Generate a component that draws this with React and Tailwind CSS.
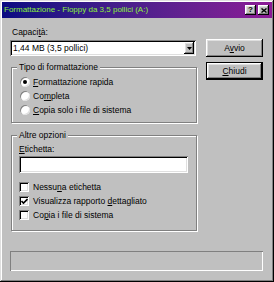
import React from 'react';

const U = ({ children }) => <span className="underline underline-offset-[1px]">{children}</span>;

const raised = 'shadow-[inset_-1px_-1px_0_#000,inset_1px_1px_0_#fff,inset_-2px_-2px_0_#808080,inset_2px_2px_0_#dfdfdf]';
const sunken = 'shadow-[inset_1px_1px_0_#808080,inset_-1px_-1px_0_#fff,inset_2px_2px_0_#000,inset_-2px_-2px_0_#dfdfdf]';

const Radio = ({ checked, children }) => (
  <div className="flex items-center h-[14px]">
    <div className="ml-[8px] w-[10px] h-[10px] rounded-full bg-white shadow-[inset_1px_1px_0_#808080,inset_-1px_-1px_0_#dfdfdf] flex items-center justify-center">
      {checked && <div className="w-[4px] h-[4px] rounded-full bg-black" />}
    </div>
    <span className="ml-[3px] leading-[10px]">{children}</span>
  </div>
);

const Check = ({ checked, children }) => (
  <div className="flex items-center h-[14px]">
    <div className={`ml-[7px] w-[10px] h-[10px] bg-white ${sunken} flex items-center justify-center`}>
      {checked && (
        <svg width="7" height="7" viewBox="0 0 7 7">
          <path d="M0.5 3 L2.5 5 L6.5 1" stroke="#000" strokeWidth="1.6" fill="none" />
        </svg>
      )}
    </div>
    <span className="ml-[4px] leading-[10px]">{children}</span>
  </div>
);

const Group = ({ title, className, children }) => (
  <div className={`ml-[1px] w-[186px] border border-[#808080] shadow-[inset_1px_1px_0_#fff,1px_1px_0_#fff] ${className}`}>
    <span className="block w-fit -mt-[6px] ml-[5px] px-[2px] bg-[#c0c0c0] leading-[10px]">{title}</span>
    {children}
  </div>
);

export default function App() {
  return (
    <div className={`w-[274px] h-[282px] bg-[#c0c0c0] p-[2px] text-[8.5px] text-black font-['Liberation_Sans',Arial,sans-serif] shadow-[inset_-1px_-1px_0_#000,inset_1px_1px_0_#dfdfdf,inset_-2px_-2px_0_#808080,inset_2px_2px_0_#fff]`}>
      {/* Title bar */}
      <div className="h-[16px] flex items-center pl-[2px] pr-[3px] bg-gradient-to-r from-[#0a0a82] to-[#8c1a96]">
        <span className="text-[8px] text-[#8cf03c] leading-[10px] whitespace-nowrap">
          Formattazione - Floppy da 3,5 pollici (A:)
        </span>
        <div className="ml-auto flex gap-[2px]">
          <div className={`w-[11px] h-[10px] bg-[#c0c0c0] ${raised} flex items-center justify-center text-[8px] font-bold leading-none`}>?</div>
          <div className={`w-[11px] h-[10px] bg-[#c0c0c0] ${raised} flex items-center justify-center`}>
            <svg width="6" height="5" viewBox="0 0 6 5">
              <path d="M0.5 0.5 L5.5 4.5 M5.5 0.5 L0.5 4.5" stroke="#000" strokeWidth="1.4" />
            </svg>
          </div>
        </div>
      </div>

      <div className="flex pl-[8px]">
        {/* Left column */}
        <div className="w-[187px]">
          <div className="mt-[9px] ml-[2px] leading-[10px]">Capaci<U>t</U>à:</div>
          <div className={`mt-[3px] w-[186px] h-[16px] bg-white ${sunken} flex items-center`}>
            <span className="ml-[3px] leading-[10px]">1,44 MB (3,5 pollici)</span>
            <div className={`ml-auto mr-[2px] w-[10px] h-[12px] bg-[#c0c0c0] ${raised} flex items-center justify-center`}>
              <svg width="5" height="3" viewBox="0 0 5 3">
                <path d="M0 0 H5 L2.5 3 Z" fill="#000" />
              </svg>
            </div>
          </div>

          <Group title="Tipo di formattazione" className="mt-[11px] pb-[5px]">
            <div className="mt-[3px]">
              <Radio checked><U>F</U>ormattazione rapida</Radio>
              <Radio>Co<U>m</U>pleta</Radio>
              <Radio><U>C</U>opia solo i file di sistema</Radio>
            </div>
          </Group>

          <Group title="Altre opzioni" className="mt-[12px] pb-[8px]">
            <div className="mt-[4px] ml-[7px] leading-[10px]"><U>E</U>tichetta:</div>
            <div className={`mt-[2px] ml-[7px] w-[169px] h-[17px] bg-white ${sunken}`} />
            <div className="mt-[7px]">
              <Check>Nessu<U>n</U>a etichetta</Check>
              <Check checked>Visualizza rapporto <U>d</U>ettagliato</Check>
              <Check>Co<U>p</U>ia i file di sistema</Check>
            </div>
          </Group>
        </div>

        {/* Right column */}
        <div className="ml-[9px] w-[57px]">
          <div className={`mt-[21px] h-[18px] bg-[#c0c0c0] ${raised} flex items-center justify-center leading-[10px]`}>
            <span>A<U>v</U>vio</span>
          </div>
          <div className="mt-[5px] h-[18px] border border-black">
            <div className={`h-full bg-[#c0c0c0] ${raised} flex items-center justify-center leading-[10px]`}>
              <span><U>C</U>hiudi</span>
            </div>
          </div>
        </div>
      </div>

      {/* Status bar */}
      <div className="mt-[20px] ml-[8px] w-[253px] h-[20px] shadow-[inset_1px_1px_0_#808080,inset_-1px_-1px_0_#fff]" />
    </div>
  );
}
